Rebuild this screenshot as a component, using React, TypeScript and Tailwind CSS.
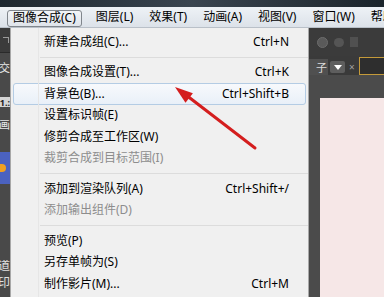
import React from "react";

const font = { fontFamily: "'Noto Sans', 'Noto Sans CJK SC', sans-serif" };

type Item = { label: string; sc?: string; disabled?: boolean; hl?: boolean } | "sep";

const items: Item[] = [
  { label: "新建合成组(C)...", sc: "Ctrl+N" },
  "sep",
  { label: "图像合成设置(T)...", sc: "Ctrl+K" },
  { label: "背景色(B)...", sc: "Ctrl+Shift+B", hl: true },
  { label: "设置标识帧(E)" },
  { label: "修剪合成至工作区(W)" },
  { label: "裁剪合成到目标范围(I)", disabled: true },
  "sep",
  { label: "添加到渲染队列(A)", sc: "Ctrl+Shift+/" },
  { label: "添加输出组件(D)", disabled: true },
  "sep",
  { label: "预览(P)" },
  { label: "另存单帧为(S)" },
  { label: "制作影片(M)...", sc: "Ctrl+M" },
];

function Row({ item }: { item: Exclude<Item, "sep"> }) {
  return (
    <div
      className={
        "mx-[2px] h-[21.5px] flex items-center justify-between pl-[30px] pr-[16px] rounded-[3px] border text-[12px] leading-none " +
        (item.hl
          ? "border-[#b4cce4] bg-gradient-to-b from-[#f7f9fc] to-[#e9f0f8] "
          : "border-transparent ") +
        (item.disabled ? "text-[#8d8d8d]" : "text-black")
      }
    >
      <span>{item.label}</span>
      {item.sc && <span>{item.sc}</span>}
    </div>
  );
}

export default function App() {
  return (
    <div
      className="relative w-[384px] h-[297px] overflow-hidden bg-[#4a4a4a] flex flex-col"
      style={font}
    >
      {/* title strip */}
      <div className="h-[7px] shrink-0 bg-gradient-to-r from-[#1e2830] via-[#3a4550] to-[#1c252c]" />
      {/* menu bar */}
      <div className="h-[21px] shrink-0 flex items-stretch bg-gradient-to-b from-[#eef2f6] to-[#dce2e9] text-[12px] leading-none text-black border-b border-[#b9c0c8]">
        <div className="w-[5px] bg-[#2c3640] mt-[3px] mb-[3px]" />
        <div className="flex items-center pl-[7px] gap-[6px] whitespace-nowrap">
          <div className="h-[17px] mt-[2px] mr-[3px] flex items-center px-[5px] rounded-[3px] border border-[#80868c] bg-gradient-to-b from-[#f2f4f7] to-[#dfe4ea]">
            图像合成(C)
          </div>
          <div className="px-[5px]">图层(L)</div>
          <div className="px-[5px]">效果(T)</div>
          <div className="px-[5px]">动画(A)</div>
          <div className="px-[5px]">视图(V)</div>
          <div className="px-[5px]">窗口(W)</div>
          <div className="px-[5px]">帮助(H)</div>
        </div>
      </div>
      {/* body */}
      <div className="flex-1 flex min-h-0">
        {/* left strip */}
        <div className="w-[10px] shrink-0 bg-[#494949] flex flex-col overflow-hidden">
          <div className="h-[24px] bg-[#3b3b3b] flex items-center justify-end pr-[1px]">
            <div className="w-[6px] h-[6px] border-t border-r border-[#9a9a9a]" />
          </div>
          <div className="h-[1px] bg-[#2a2a2a]" />
          <div className="mt-[9px] h-[11px] flex justify-end overflow-hidden text-[11px] leading-none text-[#e8e8e8] whitespace-nowrap">
            字交
          </div>
          <div className="mt-[24px] h-[10px] bg-[#d4d4d4] flex items-center justify-end overflow-hidden text-[9px] leading-none text-[#222] font-bold">
            1.:
          </div>
          <div className="mt-[12px] h-[11px] flex justify-end overflow-hidden text-[11px] leading-none text-[#e8e8e8] whitespace-nowrap">
            口画
          </div>
          <div className="mt-[22px] h-[32px] bg-[#4b62c0] flex items-center">
            <div className="w-[6px] h-[8px] rounded-r-full bg-[#f0a020]" />
          </div>
          <div className="flex-1" />
          <div className="h-[14px] flex justify-end overflow-hidden text-[12px] leading-none text-[#e0e0e0]">道</div>
          <div className="mt-[3px] mb-[6px] h-[14px] flex justify-end overflow-hidden text-[12px] leading-none text-[#e0e0e0]">印</div>
        </div>
        {/* dropdown menu */}
        <div className="w-[299px] shrink-0 bg-[#f0f0f0] border-l border-r border-[#a8a8a8] pt-[3px] relative">
          <div className="absolute left-[27px] top-0 bottom-0 w-[1px] bg-[#e6e6e6]" />
          {items.map((it, i) =>
            it === "sep" ? (
              <div key={i} className="h-[9px] flex items-center pl-[29px]">
                <div className="w-full h-[1px] bg-[#dcdcdc]" />
              </div>
            ) : (
              <Row key={i} item={it} />
            )
          )}
        </div>
        {/* right AE area */}
        <div className="flex-1 flex flex-col bg-[#4b4b4b]">
          <div className="h-[28px] bg-[#3b3b3b] flex items-center gap-[6px] pl-[8px]">
            <div className="w-[11px] h-[11px] rounded-full bg-[#5a5a5a] border border-[#6c6c6c]" />
            <div className="w-[10px] h-[9px] rounded-full bg-[#555]" />
            <div className="w-[8px] h-[10px] bg-[#505050]" />
          </div>
          <div className="h-[19px] bg-[#3a3a3a] flex items-end">
            <div className="w-[19px] h-[16px] bg-[#505050] text-[11px] leading-none text-[#ddd] flex items-center justify-end overflow-hidden pr-[1px]">
              子
            </div>
            <div className="ml-[2px] mb-[2px] w-[15px] h-[12px] rounded-[2px] bg-[#5e5e5e] flex items-center justify-center">
              <div className="w-0 h-0 border-l-[4px] border-r-[4px] border-t-[5px] border-l-transparent border-r-transparent border-t-white" />
            </div>
            <div className="ml-[4px] mb-[3px] text-[10px] leading-none text-[#a0a0a0]">×</div>
            <div className="ml-[4px] flex-1 h-[18px] border-t border-l border-b border-[#c49a3a] bg-[#2e2e2e]" />
          </div>
          <div className="h-[23px]" />
          <div className="flex-1 flex">
            <div className="w-[11px]" />
            <div className="flex-1 bg-[#f6e7e7]" />
          </div>
        </div>
      </div>
      {/* red arrow */}
      <svg
        className="absolute left-0 top-0 pointer-events-none"
        width="384"
        height="297"
        viewBox="0 0 384 297"
      >
        <line x1="255" y1="148" x2="186" y2="95" stroke="#d41e1e" strokeWidth="3" strokeLinecap="round" />
        <polygon points="175,87 185.5,102.7 192.9,93.3" fill="#d41e1e" />
      </svg>
    </div>
  );
}
